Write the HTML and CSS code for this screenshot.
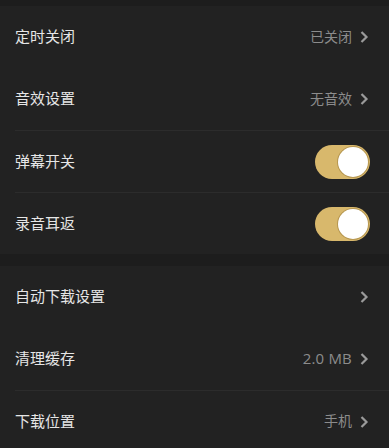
FILE: index.html
```html
<!DOCTYPE html>
<html lang="zh-CN">
<head>
    <meta charset="UTF-8">
    <meta name="viewport" content="width=device-width, initial-scale=1.0">
    <title>设置</title>
    <link rel="stylesheet" href="styles.css">
</head>
<body>

    <div class="gap top"></div>

    <!-- 播放设置 -->
    <div class="group">
        <div class="row">
            <span class="label">定时关闭</span>
            <span class="value">已关闭</span>
            <svg class="arrow" viewBox="0 0 10 14"><path d="M2.5 2 L7.5 7 L2.5 12"/></svg>
        </div>
        <div class="row">
            <span class="label">音效设置</span>
            <span class="value">无音效</span>
            <svg class="arrow" viewBox="0 0 10 14"><path d="M2.5 2 L7.5 7 L2.5 12"/></svg>
        </div>
        <div class="row line">
            <span class="label">弹幕开关</span>
            <span class="switch on"><span class="knob"></span></span>
        </div>
        <div class="row line">
            <span class="label">录音耳返</span>
            <span class="switch on"><span class="knob"></span></span>
        </div>
    </div>

    <div class="gap"></div>

    <!-- 下载设置 -->
    <div class="group">
        <div class="row">
            <span class="label">自动下载设置</span>
            <span class="value"></span>
            <svg class="arrow" viewBox="0 0 10 14"><path d="M2.5 2 L7.5 7 L2.5 12"/></svg>
        </div>
        <div class="row">
            <span class="label">清理缓存</span>
            <span class="value num">2.0 MB</span>
            <svg class="arrow" viewBox="0 0 10 14"><path d="M2.5 2 L7.5 7 L2.5 12"/></svg>
        </div>
        <div class="row line">
            <span class="label">下载位置</span>
            <span class="value">手机</span>
            <svg class="arrow" viewBox="0 0 10 14"><path d="M2.5 2 L7.5 7 L2.5 12"/></svg>
        </div>
    </div>

</body>
</html>
```

FILE: styles.css
```css
/* Page */
body {
    margin: 0;
    background: #222222;
    font-family: "Noto Sans CJK SC", "Noto Sans", sans-serif;
    color: #e8e8e8;
}

/* Space between groups */
.gap {
    height: 12px;
    background: #1d1d1d;
}

.gap.top {
    height: 6px;
}

.group {
    background: #222222;
}

/* Setting row */
.row {
    height: 62px;
    margin-left: 15px;
    padding-right: 20px;
    display: flex;
    align-items: center;
    box-sizing: border-box;
}

.row.line {
    border-top: 1px solid #2c2c2c;
}

.label {
    flex: 1;
    font-size: 15px;
    color: #e6e6e6;
    padding-bottom: 3px;
}

.value {
    font-size: 14px;
    color: #8c8c8c;
    margin-right: 7px;
    padding-bottom: 3px;
}

.value.num {
    font-family: "Open Sans", sans-serif;
    font-size: 15px;
    letter-spacing: 0.2px;
}

.arrow {
    width: 10px;
    height: 14px;
    fill: none;
    stroke: #9a9a9a;
    stroke-width: 2.2;
}

/* Toggle switch */
.switch {
    width: 55px;
    height: 34px;
    border-radius: 17px;
    background: #3a3a3a;
    display: flex;
    align-items: center;
    margin-right: -1px;
    padding: 2px;
    box-sizing: border-box;
}

.switch.on {
    background: #d8b86c;
    justify-content: flex-end;
}

.knob {
    width: 30px;
    height: 30px;
    border-radius: 50%;
    background: #ffffff;
    box-shadow: 0 0 0 1px rgba(120, 90, 30, 0.35);
}
```
